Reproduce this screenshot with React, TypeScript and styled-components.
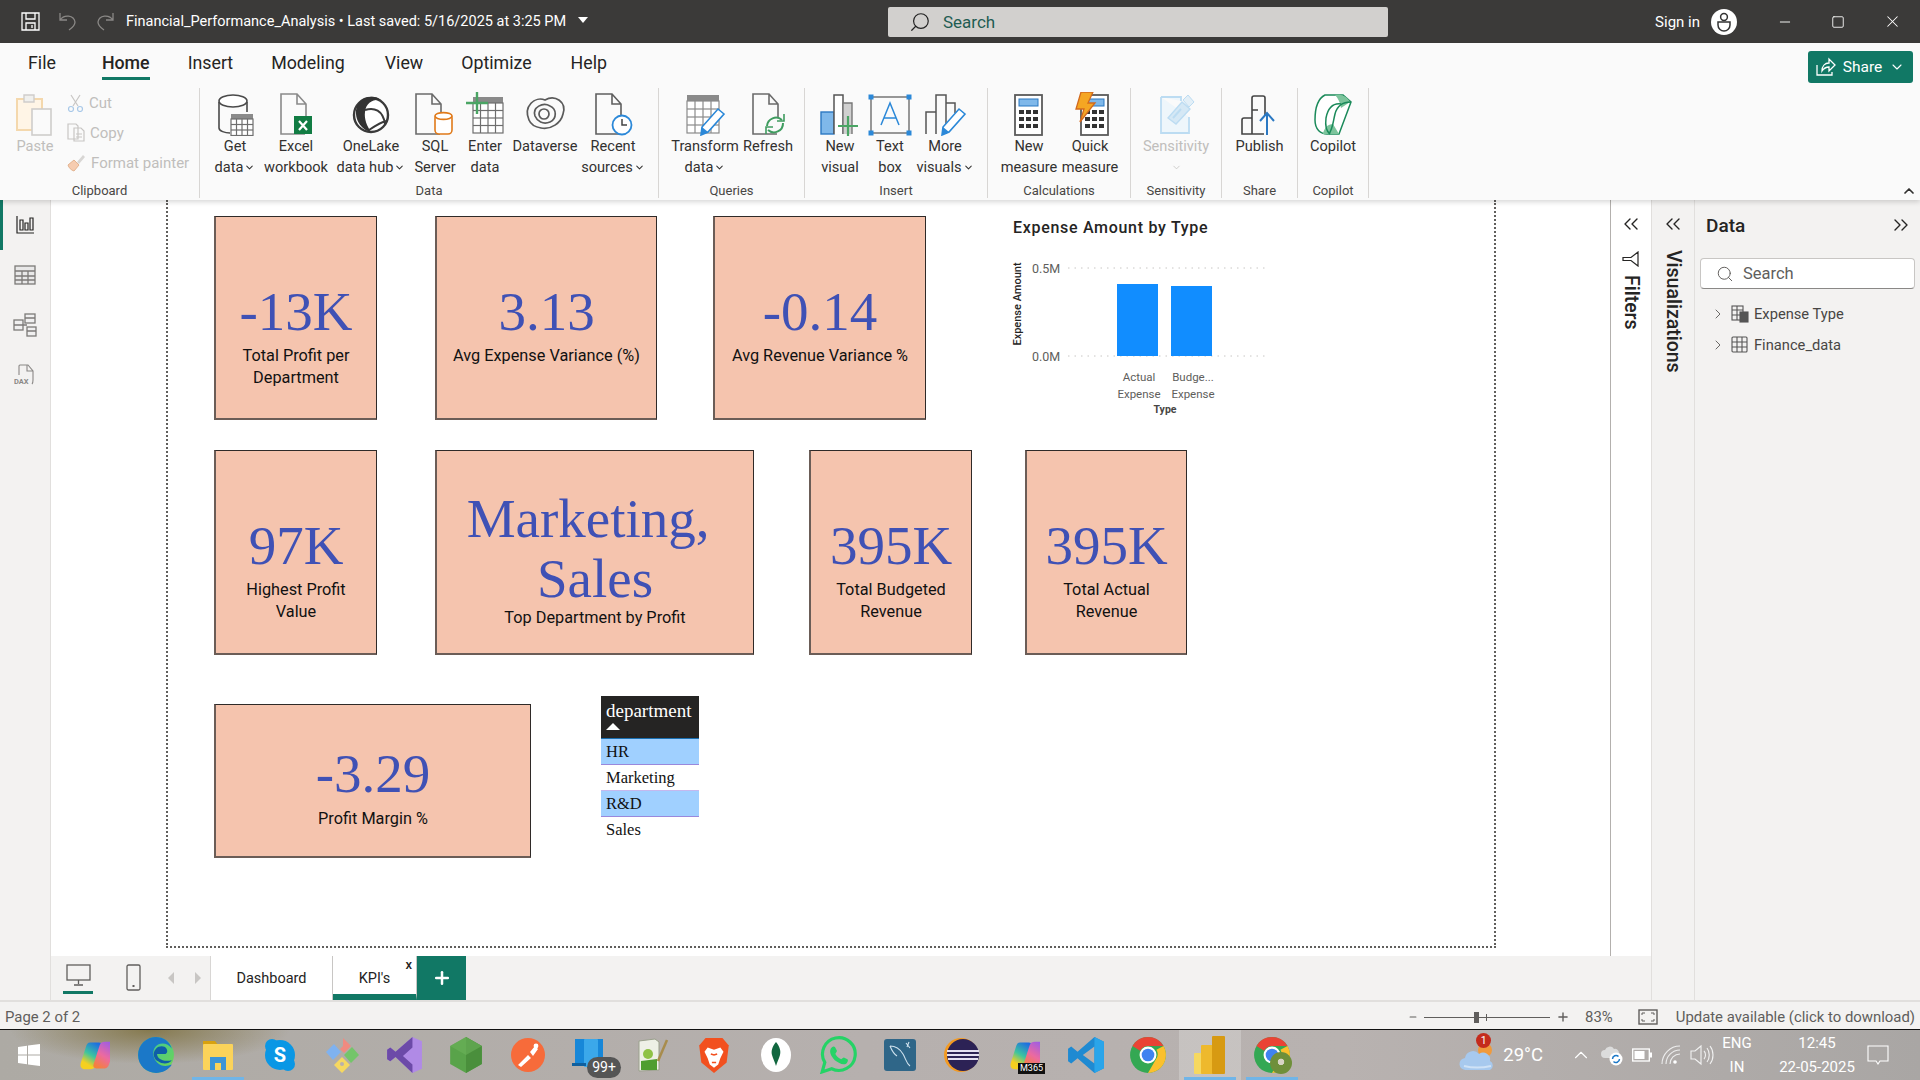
import React from "react";
import styled, { createGlobalStyle } from "styled-components";
import {
  ChevronDown,
  ChevronRight,
  ChevronUp,
  ChevronsLeft,
  ChevronsRight,
  Minus,
  Plus,
  Search,
  Square,
  X,
} from "lucide-react";

const UI_FONT = `Roboto, "Open Sans", sans-serif`;
const SERIF = `"Liberation Serif", serif`;

const GlobalStyle = createGlobalStyle`
  html, body { margin: 0; padding: 0; overflow: hidden; background: #fff; }
  #root { width: 1920px; height: 1080px; }
  * { box-sizing: border-box; }
`;

/* ---------- ribbon icons ---------- */

const I = ({ children, w = 44, h = 44 }: { children: React.ReactNode; w?: number; h?: number }) => (
  <svg width={w} height={h} viewBox={`0 0 ${w} ${h}`} fill="none">
    {children}
  </svg>
);

const Doc = ({ x = 8, c = "#737373" }: { x?: number; c?: string }) => (
  <path d={`M${x + 25} 42H${x + 1}V2h16l9 10v14M${x + 17} 2v10h9`} stroke={c} strokeWidth="1.6" />
);

const Grid = ({ x, y, s = 5.5, n = 4, m = 3, c = "#6e6e6e" }: { x: number; y: number; s?: number; n?: number; m?: number; c?: string }) => (
  <g stroke={c} strokeWidth="1.2">
    <rect x={x} y={y} width={s * n} height={s * m} fill="#fff" />
    {Array.from({ length: n - 1 }).map((_, i) => (
      <path key={i} d={`M${x + s * (i + 1)} ${y}v${s * m}`} />
    ))}
    {Array.from({ length: m - 1 }).map((_, i) => (
      <path key={i} d={`M${x} ${y + s * (i + 1)}h${s * n}`} />
    ))}
  </g>
);

const Pencil = ({ x = 0, y = 0 }: { x?: number; y?: number }) => (
  <g transform={`translate(${x} ${y})`}>
    <path d="M4 30l1-8L21 4l6 5L11 27z" fill="#fff" stroke="#2b88d8" strokeWidth="1.6" />
    <path d="M4 30l1-8 6 5z" fill="#2b88d8" />
  </g>
);

const GetDataIcon = () => (
  <I>
    <path d="M6 10v26c0 3 6 5 11 5M34 10v10" stroke="#4a4a4a" strokeWidth="1.6" />
    <ellipse cx="20" cy="9" rx="14" ry="6" stroke="#4a4a4a" strokeWidth="1.6" fill="#fff" />
    <rect x="18" y="22" width="22" height="5" fill="#8a8a8a" />
    <Grid x={18} y={27} s={5.5} n={4} m={3} />
  </I>
);
const ExcelIcon = () => (
  <I>
    <Doc x={6} c="#8a8a8a" />
    <rect x="20" y="24" width="18" height="18" fill="#117c43" />
    <path d="M25 29l8 9M33 29l-8 9" stroke="#fff" strokeWidth="2.2" />
  </I>
);
const OneLakeIcon = () => (
  <I>
    <circle cx="22" cy="23" r="17" stroke="#3a3a3a" strokeWidth="2.4" fill="#fff" />
    <path d="M8 14C12 4 26 2 32 8c-8-1-15 3-16 12-1 7 2 14 6 20C12 38 4 26 8 14z" fill="#333" />
    <path d="M16 18c9-3 18 0 20 14M20 38c6-4 12-8 17-9" stroke="#3a3a3a" strokeWidth="2" />
  </I>
);
const SqlIcon = () => (
  <I>
    <Doc x={2} c="#6b6b6b" />
    <rect x="22" y="22" width="17" height="20" rx="4" fill="#fff" stroke="#e07a1a" strokeWidth="1.6" />
    <ellipse cx="30.5" cy="24" rx="8.5" ry="3.4" fill="#fff" stroke="#e07a1a" strokeWidth="1.6" />
  </I>
);
const EnterDataIcon = () => (
  <I>
    <rect x="10" y="5" width="30" height="6" fill="#8a8a8a" />
    <Grid x={10} y={11} s={7.5} n={4} m={4} />
    <path d="M14 0v22M3 11h22" stroke="#4aa564" strokeWidth="2.4" />
  </I>
);
const DataverseIcon = () => (
  <I>
    <path
      d="M6 28C0 14 12 4 22 8c10-6 22 2 18 14-2 9-12 16-22 14-6-1-10-3-12-8z"
      stroke="#5a5a5a"
      strokeWidth="1.7"
    />
    <path d="M12 24c-3-9 8-14 15-10 7 3 7 13 0 16-7 3-13-1-15-6z" stroke="#5a5a5a" strokeWidth="1.7" />
    <circle cx="21" cy="22" r="5" stroke="#5a5a5a" strokeWidth="1.7" />
  </I>
);
const RecentIcon = () => (
  <I>
    <Doc x={4} c="#5f5f5f" />
    <circle cx="31" cy="33" r="9.5" fill="#fff" stroke="#2b88d8" strokeWidth="1.8" />
    <path d="M31 27v6h5" stroke="#444" strokeWidth="1.5" />
  </I>
);
const TransformIcon = () => (
  <I>
    <rect x="4" y="3" width="32" height="6" fill="#8a8a8a" />
    <Grid x={4} y={9} s={8} n={4} m={4} c="#8a8a8a" />
    <Pencil x={14} y={13} />
  </I>
);
const RefreshIcon = () => (
  <I>
    <Doc x={6} c="#6b6b6b" />
    <path d="M21 34a9 9 0 0 1 15-6M37 31a9 9 0 0 1-15 7" stroke="#3f9c5f" strokeWidth="2" fill="none" />
    <path d="M38 22v7h-7M20 42v-7h7" stroke="#3f9c5f" strokeWidth="1.6" fill="none" />
  </I>
);
const NewVisualIcon = () => (
  <I>
    <rect x="3" y="20" width="13" height="22" fill="#7fb8ea" stroke="#2b78c2" strokeWidth="1.4" />
    <path d="M16 42V3h9v39" stroke="#555" strokeWidth="1.5" fill="#fff" />
    <path d="M25 42V11h9v31" fill="#d0d0d0" stroke="#777" strokeWidth="1.4" />
    <path d="M30 24v20M20 34h20" stroke="#4aa564" strokeWidth="2.2" />
  </I>
);
const TextBoxIcon = () => (
  <I>
    <rect x="3" y="5" width="38" height="36" stroke="#555" strokeWidth="1.2" />
    {[
      [3, 5],
      [41, 5],
      [3, 41],
      [41, 41],
    ].map(([x, y]) => (
      <rect key={x * 100 + y} x={x - 2.5} y={y - 2.5} width="5" height="5" fill="#2b88d8" />
    ))}
    <path d="M13 33L22 11l9 22M16 26h12" stroke="#2b88d8" strokeWidth="1.5" />
  </I>
);
const MoreVisualsIcon = () => (
  <I>
    <path d="M3 42V20h10v22M13 42V3h10v39M23 42V11h9v10" stroke="#555" strokeWidth="1.5" />
    <Pencil x={15} y={13} />
  </I>
);
const Calc = ({ x = 8 }: { x?: number }) => (
  <g>
    <rect x={x} y="3" width="27" height="40" fill="#fff" stroke="#5a5a5a" strokeWidth="1.8" />
    <rect x={x + 4} y="7" width="19" height="7" fill="#7fb8ea" stroke="#2b78c2" />
    {[18, 25, 32].map((y) =>
      [4, 11, 18].map((dx) => <rect key={y * 100 + dx} x={x + dx} y={y} width="5" height="4" fill="#333" />)
    )}
  </g>
);
const NewMeasureIcon = () => (
  <I>
    <Calc x={8} />
  </I>
);
const QuickMeasureIcon = () => (
  <I>
    <Calc x={13} />
    <path d="M13 0h12l-5 11h7L12 30l4-13H8z" fill="#f5a623" stroke="#d2691e" strokeWidth="1.3" />
  </I>
);
const SensitivityIcon = () => (
  <I>
    <path d="M7 5h20v4M7 5v36h28V25" stroke="#bcdcf2" strokeWidth="1.8" fill="#eef6fb" />
    <path d="M14 26L28 10l8 7-14 15z" fill="#d5e8f5" stroke="#bcdcf2" strokeWidth="1.4" />
    <path d="M29 8l5-5 6 7-5 5z" fill="#e3eff7" stroke="#bcdcf2" />
    <path d="M19 26l8-9" stroke="#bcdcf2" strokeWidth="2" />
  </I>
);
const PublishIcon = () => (
  <I>
    <path
      d="M4 42h10V26H6a2 2 0 0 0-2 2zM14 26v-8h6M14 18V6a2 2 0 0 1 2-2h9a2 2 0 0 1 2 2v18M14 42h12"
      stroke="#444"
      strokeWidth="1.6"
    />
    <path d="M29 43V22M22 29l7-8 7 8" stroke="#2b78c2" strokeWidth="2" />
  </I>
);
const CopilotRibbonIcon = () => (
  <I>
    <path d="M14 3h18l8 7-12 32H16c-6 0-12-4-12-14C4 14 8 6 14 3z" fill="#fff" stroke="#1b8a5a" strokeWidth="1.5" />
    <path d="M24 3c6-1 12 1 15 7L30 16c-1-6-3-10-6-13zM12 42c1-6 5-10 10-10l6 10z" fill="#7cc49c" />
    <path d="M30 12c-8-1-13 4-15 14-1 8 0 13 4 16" stroke="#1b8a5a" strokeWidth="1.5" />
    <path d="M40 10c-8 0-14 4-16 12-2 8-2 14-6 20" stroke="#1b8a5a" strokeWidth="1.5" />
  </I>
);

/* ---------- taskbar icons ---------- */

const WindowsIcon = () => (
  <svg width="22" height="22" viewBox="0 0 22 22" fill="#fff">
    <path d="M0 3l9-1.3V10.4H0zM10 1.5L22 0v10.4H10zM0 11.5h9v8.8L0 19zM10 11.5h12V22l-12-1.6z" />
  </svg>
);

const T = ({ children, size = 36 }: { children: React.ReactNode; size?: number }) => (
  <svg width={size} height={size} viewBox="0 0 36 36" fill="none">
    {children}
  </svg>
);

const COPILOT_PATH = "M13 3h10c3 0 4 2 3 5l-7 22c-1 3-3 4-6 4H7c-4 0-6-3-5-7L8 8c1-3 2-5 5-5z";

const CopilotIcon = ({ id }: { id: string }) => (
  <T size={31}>
    <defs>
      <linearGradient id={`${id}a`} x1="0.7" y1="0" x2="0.2" y2="1">
        <stop offset="0" stopColor="#1f6fe0" />
        <stop offset=".45" stopColor="#3cc4a0" />
        <stop offset=".8" stopColor="#f5d020" />
      </linearGradient>
      <linearGradient id={`${id}b`} x1="0.7" y1="0" x2="0.2" y2="1">
        <stop offset="0" stopColor="#f5803c" />
        <stop offset=".45" stopColor="#ec6aa0" />
        <stop offset="1" stopColor="#9a5ce8" />
      </linearGradient>
    </defs>
    <path d={COPILOT_PATH} fill={`url(#${id}a)`} />
    <path d={COPILOT_PATH} fill={`url(#${id}b)`} transform="rotate(180 18 18) translate(-7 0)" />
  </T>
);
const EdgeIcon = () => (
  <T size={38}>
    <defs>
      <linearGradient id="edgeA" x1="0" y1="0" x2="1" y2="1">
        <stop offset="0" stopColor="#34c4a8" />
        <stop offset="1" stopColor="#72d64e" />
      </linearGradient>
    </defs>
    <circle cx="18" cy="18" r="17" fill="url(#edgeA)" />
    <path d="M1 18C1 8 9 1 18 1c7 0 13 4 15 11-3-5-9-6-13-4-6 3-6 12-1 17 4 4 9 4 14 2-3 5-9 8-15 8C9 35 1 28 1 18z" fill="#1b78c8" />
    <path d="M20 24c-4-2-6-8-2-12 3-3 8-3 10 0 1 2 1 4-1 5h-8c0 4 5 8 14 6-3 4-9 4-13 1z" fill="#0f5ea8" />
  </T>
);
const ExplorerIcon = () => (
  <T size={36}>
    <path d="M3 4h12l3 4H3z" fill="#d8a10f" />
    <rect x="3" y="7" width="30" height="26" rx="1" fill="#fbd35a" />
    <path d="M10 33V20h16v13h-5v-7h-6v7z" fill="#3d95d6" />
  </T>
);
const SkypeIcon = () => (
  <T size={36}>
    <circle cx="18" cy="18" r="15" fill="#0a97e5" />
    <circle cx="10" cy="9" r="7" fill="#0a97e5" />
    <circle cx="26" cy="27" r="7" fill="#0a97e5" />
    <text x="18" y="25" textAnchor="middle" fontSize="20" fontWeight="700" fill="#fff" fontFamily={UI_FONT}>
      S
    </text>
  </T>
);
const KrakenIcon = () => (
  <T size={36}>
    <path d="M19 1l8 8-7 7-4-4 3-3z" fill="#f08a80" />
    <path d="M2 15l8-8 7 8-8 8z" fill="#7fb2f0" />
    <path d="M28 10l7 8-8 8-7-8z" fill="#74c56a" />
    <path d="M18 20l8 8-8 8-8-8z" fill="#f6d860" />
    <circle cx="18" cy="27" r="2" fill="#b8b0ae" />
  </T>
);
const VsIcon = () => (
  <T size={38}>
    <path d="M26 1l9 4v26l-9 4L10 20l-5 4-3-2V13l3-2 5 4z" fill="#b08ae6" />
    <path d="M26 1L10 15l-5-4-3 2v9l3 2 5-4 16 15 0-8-9-8 9-8z" fill="#6c4aa8" />
  </T>
);
const NodeIcon = () => (
  <T size={38}>
    <path d="M18 1l15 8.5v17L18 35 3 26.5v-17z" fill="#59a34a" />
    <path d="M18 1l15 8.5v17L18 35z" fill="#4a8f3c" />
    <path d="M18 1L3 9.5 18 18l15-8.5z" fill="#6cb25a" opacity=".6" />
  </T>
);
const PostmanIcon = () => (
  <T size={36}>
    <circle cx="18" cy="18" r="17" fill="#f76b3a" />
    <path d="M8 28l10-10 3 3-10 9zM20 15l5-6 3 3-5 7z" fill="#fff" />
    <circle cx="26" cy="9" r="2.4" fill="#fff" />
  </T>
);
const DevicesIcon = () => (
  <T size={36}>
    <rect x="3" y="2" width="28" height="24" fill="#1787d8" />
    <rect x="12" y="2" width="14" height="28" rx="1" fill="#3ba8ea" />
    <rect x="0" y="26" width="14" height="3" fill="#0f5f9e" />
  </T>
);
const NotepadIcon = () => (
  <T size={36}>
    <path d="M5 4l16-2 4 3v28l-20 1z" fill="#eef0e6" stroke="#9aa08c" />
    <path d="M7 24l16-2v11H7z" fill="#4f9e2f" />
    <circle cx="14" cy="17" r="5" fill="#8fc246" />
    <path d="M24 24L33 3" stroke="#a88c4c" strokeWidth="2.5" />
  </T>
);
const BraveIcon = () => (
  <T size={38}>
    <path d="M10 2h16l6 7-2 16-12 10L6 25 4 9z" fill="#f2501f" />
    <path d="M12 11l6 2 6-2 3 4-3 6-2 6-4 3-4-3-2-6-3-6z" fill="#fff" />
    <path d="M15 17l3 1 3-1M16 25h4" stroke="#f2501f" strokeWidth="1.4" />
  </T>
);
const MongoIcon = () => (
  <T size={36}>
    <ellipse cx="18" cy="18" rx="15" ry="17" fill="#fff" />
    <path d="M18 5c4 5 5 9 4 13-1 4-3 7-4 11-1-4-3-7-4-11-1-4 0-8 4-13z" fill="#11673f" />
  </T>
);
const WhatsappIcon = () => (
  <T size={38}>
    <path
      d="M3 34l2.5-9A15.5 15.5 0 1 1 12 31z"
      stroke="#25d366"
      strokeWidth="3"
      fill="none"
    />
    <path
      d="M12 11c2-2 3-1 4 1l1 2c0 1-1 2-1.5 3 1 2 3 4 5.5 5 1-.5 2-2 3-1.5l3 1.5c1 1 0 3-1 4-3 2-7 0-11-3-4-4-6-9-3-12z"
      fill="#25d366"
    />
  </T>
);
const MysqlIcon = () => (
  <T size={36}>
    <rect x="2" y="2" width="32" height="32" rx="3" fill="#2f6688" />
    <path d="M8 9c6 0 10 3 13 8s3 9 7 12M8 9c2 5 4 8 7 10M24 6l4 5M27 5l-2 5" stroke="#cfe2ee" strokeWidth="1.1" fill="none" />
  </T>
);
const EclipseIcon = () => (
  <T size={36}>
    <circle cx="17" cy="18" r="17" fill="#f39a22" />
    <circle cx="19" cy="18" r="16" fill="#2c2255" />
    <path d="M3 14h32M3 18h32M4 22h30" stroke="#e4e0f2" strokeWidth="2" />
  </T>
);
const VscodeIcon = () => (
  <T size={38}>
    <path d="M26 1l9 4.5v25L26 35 10 21l-6 5-3-2V12l3-2 6 5z" fill="#1f8ad2" />
    <path d="M26 10L15 18l11 8z" fill="#b8b0ae" />
    <path d="M26 1l9 4.5v25L26 35z" fill="#2aa5ea" />
  </T>
);
const ChromeIcon = () => (
  <T size={38}>
    <circle cx="18" cy="18" r="17" fill="#34a853" />
    <path d="M18 1a17 17 0 0 1 14.7 8.5H18A8.5 8.5 0 0 0 10.6 14L3.3 9.5A17 17 0 0 1 18 1z" fill="#ea4335" />
    <path d="M32.7 9.5A17 17 0 0 1 18 35l7.4-12.7A8.5 8.5 0 0 0 26 13z" fill="#fbc02d" />
    <circle cx="18" cy="18" r="8" fill="#fff" />
    <circle cx="18" cy="18" r="6" fill="#3f83f0" />
  </T>
);
const PowerBiIcon = () => (
  <svg width="32" height="38" viewBox="0 0 32 38">
    <rect x="0" y="17" width="11" height="21" rx="1" fill="#f6d860" />
    <rect x="7" y="9" width="12" height="29" rx="1" fill="#eeb92d" />
    <rect x="18" y="0" width="13" height="38" rx="1" fill="#d79a12" />
  </svg>
);
const WeatherIcon = () => (
  <svg width="38" height="34" viewBox="0 0 38 34">
    <circle cx="26" cy="12" r="7" fill="#f09a3c" />
    <path d="M7 32a6 6 0 0 1-1-12 8 8 0 0 1 14-4 7 7 0 0 1 11 7 5 5 0 0 1 0 9z" fill="#a7c9ee" />
    <path d="M5 28c8 2 18 2 27 0" stroke="#cfe2f6" strokeWidth="2" fill="none" />
  </svg>
);
const CloudSyncIcon = () => (
  <svg width="24" height="24" viewBox="0 0 24 24">
    <path d="M5 15a4 4 0 0 1 0-8 5 5 0 0 1 9-1 4 4 0 0 1 5 4 3 3 0 0 1 0 5z" fill="#dcdcdc" />
    <circle cx="16" cy="16" r="6.5" fill="#fff" />
    <path d="M12.5 16a3.5 3.5 0 0 1 6-2.4M19.5 16a3.5 3.5 0 0 1-6 2.4" stroke="#1b78c8" strokeWidth="1.5" fill="none" />
  </svg>
);
const BatteryIcon = () => (
  <svg width="20" height="14" viewBox="0 0 20 14">
    <rect x=".7" y="1" width="16.6" height="12" stroke="#fff" strokeWidth="1.3" fill="none" />
    <rect x="2.5" y="3" width="10" height="8" fill="#fff" />
    <rect x="18" y="4.5" width="2" height="5" fill="#fff" />
  </svg>
);
const SignalIcon = () => (
  <svg width="22" height="22" viewBox="0 0 22 22" fill="none" stroke="#eee" strokeWidth="1.1">
    <path d="M2 20A18 18 0 0 1 20 2M6 20A14 14 0 0 1 20 6M10 20a10 10 0 0 1 10-10" />
    <circle cx="15" cy="18" r="1.8" fill="#fff" stroke="none" />
  </svg>
);
const VolumeIcon = () => (
  <svg width="24" height="22" viewBox="0 0 24 22" fill="none" stroke="#f2f2f2" strokeWidth="1.1">
    <path d="M1 7h4l6-5v18l-6-5H1zM14 7c2 2 2 6 0 8M17 4c3 4 3 10 0 14M20 2c4 5 4 13 0 18" />
  </svg>
);
const NotifyGlyph = () => (
  <svg width="22" height="22" viewBox="0 0 22 22" fill="none" stroke="#fff" strokeWidth="1.1">
    <path d="M1 2h20v15h-8l-2 3-2-3H1z" />
  </svg>
);

/* ---------- small icons ---------- */

const SaveIcon = () => (
  <svg width="19" height="19" viewBox="0 0 19 19" fill="none" stroke="#fff" strokeWidth="1.3">
    <path d="M1 1h17v17H1zM5 1v6h9V1M5 18v-7h9v7M11 13v3" />
  </svg>
);
const UndoIcon = ({ flip }: { flip?: boolean }) => (
  <svg width="18" height="19" viewBox="0 0 18 19" fill="none" stroke="#8a8886" strokeWidth="1.3">
    <g transform={flip ? "translate(18 0) scale(-1 1)" : undefined}>
      <path d="M1 1v7h7M1 8c4-6 14-5 15 2 0 3-3 6-6 8" />
    </g>
  </svg>
);
const AvatarIcon = () => (
  <svg width="26" height="26" viewBox="0 0 26 26">
    <circle cx="13" cy="13" r="13" fill="#fff" />
    <circle cx="13" cy="8" r="3.4" fill="none" stroke="#333" strokeWidth="1.5" />
    <path d="M7 13h12v3a6 6 0 0 1-12 0z" fill="none" stroke="#333" strokeWidth="1.5" />
  </svg>
);
const ShareIcon = () => (
  <svg width="20" height="20" viewBox="0 0 20 20" fill="none" stroke="#fff" strokeWidth="1.3">
    <path d="M1 8v10h15v-3M6 14c0-5 3-8 7-8V2l6 6-6 6v-4c-3 0-5 1-7 4z" />
  </svg>
);
const FunnelIcon = () => (
  <svg width="18" height="16" viewBox="0 0 18 16" fill="none" stroke="#252423" strokeWidth="1.2">
    <path d="M16 1v14L9 9.500H1V6.500h8z" />
  </svg>
);
const ReportIcon = () => (
  <svg width="18" height="18" viewBox="0 0 18 18" fill="none" stroke="#252423" strokeWidth="1.2">
    <path d="M1 0v17h17M4 4h3v10H4zM9 7h3v7H9zM14 2h3v12h-3z" />
  </svg>
);
const TableIcon = () => (
  <svg width="22" height="20" viewBox="0 0 22 20" fill="#e8e8e8" stroke="#7c7a78" strokeWidth="1.3">
    <rect x="1" y="1" width="20" height="18" />
    <path d="M1 6h20M1 11h20M1 15h20M8 6v13M14 6v13" fill="none" />
  </svg>
);
const ModelIcon = () => (
  <svg width="24" height="24" viewBox="0 0 24 24" fill="#f0f0f0" stroke="#7c7a78" strokeWidth="1.3">
    <rect x="1" y="7" width="9" height="10" />
    <rect x="12" y="1" width="10" height="9" />
    <rect x="14" y="14" width="9" height="9" />
    <path d="M1 12h9M12 5h10M14 18h9M10 12h4" fill="none" />
  </svg>
);
const DaxIcon = () => (
  <svg width="22" height="22" viewBox="0 0 22 22" fill="none" stroke="#8a8886" strokeWidth="1.1">
    <path d="M5 11V2a1 1 0 0 1 1-1h8l5 6v9c0 1 0 3-1 4M13 1v6h6" />
    <text x="0" y="20" fontSize="7.5" fontWeight="700" fill="#8a8886" stroke="none" fontFamily={UI_FONT}>
      DAX
    </text>
  </svg>
);
const FieldCalcIcon = () => (
  <svg width="18" height="18" viewBox="0 0 18 18" fill="none" stroke="#555" strokeWidth="1.1">
    <rect x="1" y="1" width="11" height="14" />
    <path d="M1 5h11M1 10h11M6 1v14" />
    <rect x="9" y="7" width="8" height="10" fill="#555" />
  </svg>
);
const FieldTableIcon = () => (
  <svg width="18" height="17" viewBox="0 0 18 17" fill="none" stroke="#555" strokeWidth="1.1">
    <rect x="1" y="1" width="15" height="15" rx="1" />
    <path d="M1 6h15M1 11h15M6 1v15M11 1v15" />
  </svg>
);
const MonitorIcon = () => (
  <svg width="25" height="23" viewBox="0 0 25 23" fill="none" stroke="#605e5c" strokeWidth="1.3">
    <rect x="1" y="1" width="23" height="15" />
    <path d="M12.500 16v4M8 21h9" />
  </svg>
);
const PhoneIcon = () => (
  <svg width="15" height="27" viewBox="0 0 15 27" fill="none" stroke="#605e5c" strokeWidth="1.3">
    <rect x="1" y="1" width="13" height="25" rx="1.5" />
    <path d="M6.500 22h2" strokeWidth="2" />
  </svg>
);
const FitIcon = () => (
  <svg width="20" height="16" viewBox="0 0 20 16" fill="none" stroke="#605e5c">
    <rect x="1" y="1" width="18" height="14" strokeWidth="1.4" />
    <path d="M4 6V4h3M13 4h3v2M16 10v2h-3M7 12H4v-2" strokeWidth="1" />
  </svg>
);
const CutIcon = () => (
  <svg width="17" height="18" viewBox="0 0 17 18" fill="none" stroke="#c8c6c4" strokeWidth="1.2">
    <path d="M4 1l7 11M13 1L6 12" />
    <circle cx="4" cy="15" r="2.500" stroke="#a8c8e8" />
    <circle cx="13" cy="15" r="2.500" stroke="#a8c8e8" />
  </svg>
);
const CopyIcon = () => (
  <svg width="18" height="19" viewBox="0 0 18 19" fill="none" stroke="#c8c6c4" strokeWidth="1.2">
    <path d="M1 1h8l2 2v13H1zM7 5h7l3 3v10H7zM9 11h6M9 14h6" />
  </svg>
);
const BrushIcon = () => (
  <svg width="19" height="19" viewBox="0 0 19 19">
    <path d="M1 12l6-5 5 5-5 6c-3-1-5-3-6-6z" fill="#f6ccb0" stroke="#e3b38f" />
    <path d="M10 9l6-7 2 2-6 7z" fill="#d8d6d4" />
  </svg>
);
const PasteIcon = () => (
  <svg width="40" height="44" viewBox="0 0 40 44" fill="none">
    <path d="M2 7h25v31H2z" fill="#fff5e6" stroke="#f4d8ad" strokeWidth="2" />
    <path d="M9 3h10v7H9z" fill="#f0f0ee" stroke="#cfcdcb" strokeWidth="1.4" />
    <rect x="17" y="17" width="19" height="26" fill="#fafafa" stroke="#cfcdcb" strokeWidth="1.6" />
  </svg>
);

/* ---------- layout ---------- */

const Shell = styled.div`
  width: 1920px;
  height: 1080px;
  display: flex;
  flex-direction: column;
  overflow: hidden;
  font-family: ${UI_FONT};
  color: #252423;
`;

const TitleBar = styled.header`
  flex: 0 0 43px;
  background: #3b3a39;
  color: #fff;
  display: flex;
  align-items: center;
  position: relative;
  padding-left: 21px;
`;

const QuickAccess = styled.div`
  display: flex;
  align-items: center;
  gap: 19px;
  width: 105px;
`;

const DocTitle = styled.div`
  font-size: 14.5px;
  display: flex;
  align-items: center;
  gap: 6px;
  white-space: nowrap;
`;

const Caret = styled.span`
  width: 0;
  height: 0;
  margin-left: 6px;
  margin-top: -4px;
  border: 5.5px solid transparent;
  border-top: 6px solid #fff;
  border-bottom: 0;
`;

const TopSearch = styled.div`
  position: absolute;
  left: 888px;
  top: 7px;
  width: 500px;
  height: 30px;
  background: #d2d0ce;
  border-radius: 2px;
  display: flex;
  align-items: center;
  gap: 12px;
  padding-left: 21px;
  color: #1f5c52;
  font-size: 17px;
`;

const FlippedSearch = styled(Search)`
  transform: scaleX(-1);
`;

const TitleRight = styled.div`
  margin-left: auto;
  display: flex;
  align-items: center;
  font-size: 15px;
`;

const SignIn = styled.span`
  margin-right: 11px;
`;

const WindowButton = styled.span<{ $ml?: number }>`
  display: flex;
  margin-left: ${(p) => p.$ml ?? 0}px;
`;

const Ribbon = styled.section`
  flex: 0 0 157px;
  background: #fafafa;
  position: relative;
  z-index: 2;
  box-shadow: 0 2px 5px rgba(0, 0, 0, 0.16);
`;

const TabRow = styled.nav`
  height: 45px;
  display: flex;
  align-items: flex-start;
  padding-left: 28px;
  gap: 38px;
  font-size: 17.8px;
  position: relative;
`;

const RibbonTab = styled.span<{ $active?: boolean; $ml?: number }>`
  height: 37px;
  padding-top: 9px;
  margin-left: ${(p) => p.$ml ?? 0}px;
  font-weight: ${(p) => (p.$active ? 500 : 400)};
  border-bottom: ${(p) => (p.$active ? "3px solid #117865" : "none")};
`;

const ShareButton = styled.button`
  position: absolute;
  left: 1808px;
  top: 8px;
  width: 105px;
  height: 32px;
  border: 0;
  border-radius: 3px;
  background: #117865;
  color: #fff;
  display: flex;
  align-items: center;
  justify-content: center;
  gap: 7px;
  font: 15.5px ${UI_FONT};
`;

const GroupRow = styled.div`
  display: flex;
  height: 110px;
`;

const Group = styled.div<{ $w: number; $pl?: number }>`
  width: ${(p) => p.$w}px;
  height: 110px;
  display: flex;
  flex-direction: column;
  padding-left: ${(p) => p.$pl ?? 0}px;
  border-right: 1px solid #d8d6d4;
`;

const GroupItems = styled.div`
  flex: 1;
  display: flex;
  align-items: flex-start;
  padding-top: 4px;
`;

const GroupLabel = styled.div<{ $ml?: number }>`
  height: 14px;
  line-height: 14px;
  text-align: center;
  font-size: 13px;
  color: #484644;
  margin-left: ${(p) => -(p.$ml ?? 0)}px;
`;

const RibbonButton = styled.div<{ $w: number; $disabled?: boolean }>`
  width: ${(p) => p.$w}px;
  display: flex;
  flex-direction: column;
  align-items: center;
  color: ${(p) => (p.$disabled ? "#c0bebc" : "#323130")};
  font-size: 14.6px;
  line-height: 21px;
  white-space: nowrap;
`;

const IconBox = styled.div`
  height: 44px;
  display: flex;
  align-items: center;
  justify-content: center;
`;

const SmallChevron = styled(ChevronDown)`
  vertical-align: -1px;
  margin-left: 1px;
`;

const SensitivityChevron = styled(ChevronDown)`
  margin-top: 5px;
`;

const ClipboardSide = styled.div`
  display: flex;
  flex-direction: column;
  margin-left: 12px;
  gap: 9px;
  color: #c0bebc;
  font-size: 15px;
`;

const ClipRow = styled.div`
  display: flex;
  align-items: center;
  gap: 5px;
  height: 21px;
  white-space: nowrap;
`;

const CollapseButton = styled.span`
  position: absolute;
  right: 3px;
  bottom: 1px;
  display: flex;
`;

const Main = styled.div`
  flex: 1;
  display: flex;
  min-height: 0;
`;

const Rail = styled.aside`
  width: 51px;
  background: #f3f2f1;
  border-right: 1px solid #e1dfdd;
  display: flex;
  flex-direction: column;
`;

const RailItem = styled.div<{ $active?: boolean }>`
  height: 50px;
  display: flex;
  align-items: center;
  justify-content: center;
  border-left: 3px solid ${(p) => (p.$active ? "#117865" : "transparent")};
  padding-right: 3px;
`;

const Center = styled.div`
  flex: 0 0 1600px;
  display: flex;
  flex-direction: column;
  min-width: 0;
`;

const CanvasArea = styled.div`
  flex: 1;
  display: flex;
  background: #fff;
  min-height: 0;
`;

const Canvas = styled.main`
  flex: 1;
  padding: 0 0 8px 115px;
  min-width: 0;
`;

const Page = styled.div`
  width: 1330px;
  height: 100%;
  border: 2px dotted #605e5c;
  border-top: 0;
  padding: 16px 0 0 46px;
`;

const VisualRow = styled.div<{ $mt?: number }>`
  display: flex;
  align-items: flex-start;
  margin-top: ${(p) => p.$mt ?? 0}px;
`;

const Card = styled.div<{ $w: number; $h: number; $pt: number; $ml?: number; $mt?: number }>`
  width: ${(p) => p.$w}px;
  height: ${(p) => p.$h}px;
  margin-left: ${(p) => p.$ml ?? 0}px;
  margin-top: ${(p) => p.$mt ?? 0}px;
  padding-top: ${(p) => p.$pt}px;
  background: #f5c4ae;
  border-style: solid;
  border-width: 1px 1px 2px 2px;
  border-color: #2f2a28 #2f2a28 #6b5d57 #6b5d57;
  text-align: center;
`;

const CardValue = styled.div`
  font: 55px/60px ${SERIF};
  color: #3f51b5;
`;

const CardLabel = styled.div<{ $mt?: number }>`
  margin-top: ${(p) => p.$mt ?? 3}px;
  font-size: 16.3px;
  line-height: 22px;
  color: #111;
`;

const ChartBlock = styled.figure`
  margin: 0 0 0 84px;
  width: 270px;
`;

const ChartTitle = styled.figcaption`
  padding: 1px 0 0 3px;
  height: 24px;
  font-size: 16px;
  letter-spacing: 0.7px;
  line-height: 22px;
  font-weight: 500;
  color: #252423;
  white-space: nowrap;
`;

const ChartSvg = styled.svg`
  display: block;
`;

const DeptTable = styled.table`
  margin-left: 70px;
  width: 98px;
  border-collapse: collapse;
  font-family: ${SERIF};
  font-size: 16.5px;
`;

const DeptHead = styled.th`
  height: 42px;
  background: #252423;
  color: #fff;
  font-size: 19px;
  font-weight: 400;
  line-height: 22px;
  text-align: left;
  padding: 4px 0 0 5px;
  vertical-align: top;
  border-bottom: 1px solid #1a6fb0;
`;

const SortArrow = styled.div`
  width: 0;
  height: 0;
  margin-top: 1px;
  border: 7px solid transparent;
  border-bottom: 7px solid #fff;
  border-top: 0;
`;

const DeptCell = styled.td<{ $band?: boolean }>`
  height: 26px;
  padding: 2px 0 0 5px;
  background: ${(p) => (p.$band ? "#a0d0ff" : "#fff")};
  color: #111;
  border-bottom: 1px solid ${(p) => (p.$band ? "#9a88dc" : "#c5b8ee")};
`;

const PlainCell = styled(DeptCell)`
  border-bottom: 0;
`;

const FiltersPane = styled.div`
  flex: 0 0 41px;
  border-left: 1px solid #b3b0ad;
  display: flex;
  flex-direction: column;
  align-items: center;
  padding-top: 12px;
`;

const FunnelSlot = styled.div`
  margin-top: 15px;
  display: flex;
`;

const VerticalLabel = styled.div<{ $mt: number }>`
  writing-mode: vertical-rl;
  font-size: 19.5px;
  font-weight: 500;
  margin-top: ${(p) => p.$mt}px;
  color: #252423;
  white-space: nowrap;
`;

const PageTabs = styled.div`
  flex: 0 0 44px;
  background: #f3f2f1;
  display: flex;
  align-items: stretch;
`;

const ViewToggles = styled.div`
  width: 160px;
  display: flex;
  align-items: center;
  border-right: 1px solid #d8d6d4;
`;

const ViewButton = styled.div<{ $active?: boolean; $w: number }>`
  width: ${(p) => p.$w}px;
  height: 44px;
  padding-top: 8px;
  display: flex;
  justify-content: center;
  position: relative;
  &::after {
    content: "";
    display: ${(p) => (p.$active ? "block" : "none")};
    position: absolute;
    left: 12px;
    right: 12px;
    bottom: 6px;
    height: 3px;
    background: #117865;
  }
`;

const PagerArrow = styled.span<{ $right?: boolean }>`
  width: 0;
  height: 0;
  margin-left: ${(p) => (p.$right ? 21 : 7)}px;
  border-style: solid;
  border-width: 6px 0 6px 6px;
  border-color: transparent transparent transparent #c8c6c4;
  transform: ${(p) => (p.$right ? "none" : "scaleX(-1)")};
`;

const PageTab = styled.div<{ $active?: boolean; $w: number }>`
  width: ${(p) => p.$w}px;
  background: #fff;
  border-right: 1px solid #c8c6c4;
  border-bottom: ${(p) => (p.$active ? "6px solid #117865" : "none")};
  display: flex;
  align-items: center;
  justify-content: center;
  font-size: 14.5px;
  padding-top: ${(p) => (p.$active ? 6 : 0)}px;
  position: relative;
`;

const TabClose = styled.span`
  position: absolute;
  right: 4px;
  top: 1px;
  font-size: 13px;
  font-weight: 500;
`;

const AddPage = styled.div`
  width: 49px;
  background: #117865;
  display: flex;
  align-items: center;
  justify-content: center;
`;

const VizPane = styled.aside`
  flex: 0 0 44px;
  background: #f3f2f1;
  border-left: 1px solid #e1dfdd;
  border-right: 1px solid #e1dfdd;
  display: flex;
  flex-direction: column;
  align-items: center;
  padding-top: 12px;
`;

const DataPane = styled.aside`
  flex: 1;
  background: #f3f2f1;
  padding: 13px 5px 0 11px;
`;

const DataHeader = styled.div`
  display: flex;
  align-items: center;
  justify-content: space-between;
  font-size: 19px;
  font-weight: 500;
  height: 24px;
  padding-right: 2px;
`;

const DataSearch = styled.div`
  margin: 21px 0 0 -6px;
  height: 31px;
  border: 1px solid #c8c6c4;
  border-bottom: 1.5px solid #8a8886;
  border-radius: 4px;
  background: #fff;
  display: flex;
  align-items: center;
  gap: 9px;
  padding-left: 15px;
  color: #605e5c;
  font-size: 16.5px;
`;

const TreeList = styled.ul`
  list-style: none;
  margin: 10px 0 0;
  padding: 0 0 0 4px;
`;

const TreeRow = styled.li`
  height: 30.5px;
  display: flex;
  align-items: center;
  gap: 5px;
  font-size: 14.7px;
  color: #484644;
`;

const StatusBar = styled.footer`
  flex: 0 0 29px;
  background: #f3f2f1;
  border-top: 2px solid #e1dfdd;
  display: flex;
  align-items: center;
  padding: 3px 0 0 5px;
  color: #605e5c;
  font-size: 14.9px;
  white-space: nowrap;
`;

const ZoomControls = styled.div`
  margin-left: auto;
  display: flex;
  align-items: center;
  padding-right: 5px;
`;

const ZoomTrack = styled.div`
  width: 126px;
  height: 1px;
  margin: 0 6px;
  background: #605e5c;
  position: relative;
`;

const ZoomThumb = styled.span`
  position: absolute;
  left: 50px;
  top: -5px;
  width: 5px;
  height: 11px;
  background: #605e5c;
`;

const ZoomTick = styled.span`
  position: absolute;
  left: 62px;
  top: -3px;
  width: 1px;
  height: 7px;
  background: #605e5c;
`;

const ZoomPct = styled.span`
  margin: 0 25px 0 15px;
`;

const UpdateText = styled.span`
  margin-left: 18px;
`;

const Taskbar = styled.footer`
  flex: 0 0 51px;
  border-top: 1px solid #111;
  background:
    radial-gradient(ellipse 140px 34px at 150px 0, rgba(120, 105, 50, 0.75), rgba(120, 105, 50, 0) 100%),
    linear-gradient(90deg, #adaaa4 0%, #b6b0ae 45%, #b8b2b0 70%, #a9a6a4 100%);
  display: flex;
  align-items: stretch;
  color: #fff;
`;

const StartButton = styled.div`
  width: 63px;
  display: flex;
  align-items: center;
  justify-content: center;
  padding-right: 5px;
`;

const TaskIcon = styled.div<{ $active?: boolean; $open?: boolean }>`
  width: 62px;
  display: flex;
  align-items: center;
  justify-content: center;
  position: relative;
  background: ${(p) => (p.$active ? "rgba(255,255,255,0.22)" : "transparent")};
  &::after {
    content: "";
    display: ${(p) => (p.$open ? "block" : "none")};
    position: absolute;
    left: 5px;
    right: 5px;
    bottom: 0;
    height: 3px;
    background: #70b5e8;
  }
`;

const Badge = styled.span`
  position: absolute;
  right: 0;
  bottom: 2px;
  min-width: 34px;
  height: 21px;
  padding: 0 4px;
  border-radius: 11px;
  background: #555;
  font-size: 14px;
  line-height: 21px;
  text-align: center;
`;

const M365Tag = styled.span`
  position: absolute;
  left: 25px;
  bottom: 6px;
  padding: 0 2px;
  background: #111;
  font-size: 9px;
  line-height: 11px;
`;

const ProfileDot = styled.span`
  position: absolute;
  right: 11px;
  bottom: 6px;
  width: 22px;
  height: 22px;
  border-radius: 50%;
  background: radial-gradient(circle at 50% 45%, #d8d4c4 0 18%, #6f8f3a 22% 100%);
`;

const Tray = styled.div`
  margin-left: auto;
  display: flex;
  align-items: center;
  padding-right: 31px;
  font-size: 14px;
`;

const WeatherBox = styled.div`
  position: relative;
  display: flex;
  align-items: center;
  margin-right: 27px;
  gap: 6px;
  font-size: 18.5px;
`;

const AlertDot = styled.span`
  position: absolute;
  left: 17px;
  top: -5px;
  width: 15px;
  height: 15px;
  border-radius: 50%;
  background: #c42b1c;
  font-size: 10.5px;
  line-height: 15px;
  text-align: center;
`;

const TrayIcons = styled.div`
  display: flex;
  align-items: center;
  gap: 8px;
`;

const TwoLine = styled.div<{ $w: number; $ml: number }>`
  width: ${(p) => p.$w}px;
  margin-left: ${(p) => p.$ml}px;
  text-align: center;
  font-size: 15px;
  line-height: 24px;
  white-space: nowrap;
`;

const NotifyIcon = styled.div`
  margin-left: 5px;
  display: flex;
`;

/* ---------- page ---------- */

const Caretted = ({ children }: { children: React.ReactNode }) => (
  <span>
    {children}
    <SmallChevron size={11} strokeWidth={2.2} />
  </span>
);

const ExpenseChart = () => {
  const textProps = { fontFamily: UI_FONT, fill: "#605e5c" };
  return (
    <ChartSvg width="270" height="180" viewBox="0 0 270 180">
      <text
        transform="translate(11 64) rotate(-90)"
        textAnchor="middle"
        fontSize="11"
        fontWeight="500"
        fontFamily={UI_FONT}
        fill="#252423"
      >
        Expense Amount
      </text>
      <text x="22" y="33" fontSize="12.5" {...textProps}>
        0.5M
      </text>
      <text x="22" y="121" fontSize="12.5" {...textProps}>
        0.0M
      </text>
      <path d="M58 28H255M58 116H255" stroke="#c8c6c4" strokeDasharray="1.5 5" />
      <rect x="107" y="44" width="41" height="72" fill="#118dff" />
      <rect x="161" y="46" width="41" height="70" fill="#118dff" />
      <text x="129" y="141" textAnchor="middle" fontSize="11.5" {...textProps}>
        Actual
      </text>
      <text x="129" y="158" textAnchor="middle" fontSize="11.5" {...textProps}>
        Expense
      </text>
      <text x="183" y="141" textAnchor="middle" fontSize="11.5" {...textProps}>
        Budge...
      </text>
      <text x="183" y="158" textAnchor="middle" fontSize="11.5" {...textProps}>
        Expense
      </text>
      <text x="155" y="173" textAnchor="middle" fontSize="10.5" fontWeight="700" fontFamily={UI_FONT} fill="#484644">
        Type
      </text>
    </ChartSvg>
  );
};

export default function App() {
  return (
    <>
      <GlobalStyle />
      <Shell>
        <TitleBar>
          <QuickAccess>
            <SaveIcon />
            <UndoIcon />
            <UndoIcon flip />
          </QuickAccess>
          <DocTitle>
            Financial_Performance_Analysis • Last saved: 5/16/2025 at 3:25 PM
            <Caret />
          </DocTitle>
          <TopSearch>
            <FlippedSearch size={22} color="#222" strokeWidth={1.3} />
            Search
          </TopSearch>
          <TitleRight>
            <SignIn>Sign in</SignIn>
            <AvatarIcon />
            <WindowButton $ml={40}>
              <Minus size={16} color="#fff" strokeWidth={1.4} />
            </WindowButton>
            <WindowButton $ml={38}>
              <Square size={14} color="#fff" strokeWidth={1.5} />
            </WindowButton>
            <WindowButton $ml={38}>
              <X size={19} color="#fff" strokeWidth={1.3} />
            </WindowButton>
            <WindowButton $ml={18} />
          </TitleRight>
        </TitleBar>

        <Ribbon>
          <TabRow>
            <RibbonTab>File</RibbonTab>
            <RibbonTab $active $ml={8}>
              Home
            </RibbonTab>
            <RibbonTab>Insert</RibbonTab>
            <RibbonTab>Modeling</RibbonTab>
            <RibbonTab $ml={2}>View</RibbonTab>
            <RibbonTab>Optimize</RibbonTab>
            <RibbonTab $ml={1}>Help</RibbonTab>
            <ShareButton>
              <ShareIcon />
              Share
              <ChevronDown size={16} strokeWidth={1.6} />
            </ShareButton>
          </TabRow>
          <GroupRow>
            <Group $w={200} $pl={15}>
              <GroupItems>
                <RibbonButton $w={40} $disabled>
                  <IconBox>
                    <PasteIcon />
                  </IconBox>
                  Paste
                </RibbonButton>
                <ClipboardSide>
                  <ClipRow>
                    <CutIcon />
                    Cut
                  </ClipRow>
                  <ClipRow>
                    <CopyIcon />
                    Copy
                  </ClipRow>
                  <ClipRow>
                    <BrushIcon />
                    Format painter
                  </ClipRow>
                </ClipboardSide>
              </GroupItems>
              <GroupLabel $ml={15}>Clipboard</GroupLabel>
            </Group>
            <Group $w={459} $pl={5}>
              <GroupItems>
                <RibbonButton $w={60}>
                  <IconBox>
                    <GetDataIcon />
                  </IconBox>
                  Get
                  <Caretted>data</Caretted>
                </RibbonButton>
                <RibbonButton $w={62}>
                  <IconBox>
                    <ExcelIcon />
                  </IconBox>
                  Excel
                  <span>workbook</span>
                </RibbonButton>
                <RibbonButton $w={88}>
                  <IconBox>
                    <OneLakeIcon />
                  </IconBox>
                  OneLake
                  <Caretted>data hub</Caretted>
                </RibbonButton>
                <RibbonButton $w={40}>
                  <IconBox>
                    <SqlIcon />
                  </IconBox>
                  SQL
                  <span>Server</span>
                </RibbonButton>
                <RibbonButton $w={60}>
                  <IconBox>
                    <EnterDataIcon />
                  </IconBox>
                  Enter
                  <span>data</span>
                </RibbonButton>
                <RibbonButton $w={60}>
                  <IconBox>
                    <DataverseIcon />
                  </IconBox>
                  Dataverse
                </RibbonButton>
                <RibbonButton $w={76}>
                  <IconBox>
                    <RecentIcon />
                  </IconBox>
                  Recent
                  <Caretted>sources</Caretted>
                </RibbonButton>
              </GroupItems>
              <GroupLabel $ml={5}>Data</GroupLabel>
            </Group>
            <Group $w={146} $pl={6}>
              <GroupItems>
                <RibbonButton $w={80}>
                  <IconBox>
                    <TransformIcon />
                  </IconBox>
                  Transform
                  <Caretted>data</Caretted>
                </RibbonButton>
                <RibbonButton $w={46}>
                  <IconBox>
                    <RefreshIcon />
                  </IconBox>
                  Refresh
                </RibbonButton>
              </GroupItems>
              <GroupLabel $ml={6}>Queries</GroupLabel>
            </Group>
            <Group $w={183} $pl={10}>
              <GroupItems>
                <RibbonButton $w={50}>
                  <IconBox>
                    <NewVisualIcon />
                  </IconBox>
                  New
                  <span>visual</span>
                </RibbonButton>
                <RibbonButton $w={50}>
                  <IconBox>
                    <TextBoxIcon />
                  </IconBox>
                  Text
                  <span>box</span>
                </RibbonButton>
                <RibbonButton $w={60}>
                  <IconBox>
                    <MoreVisualsIcon />
                  </IconBox>
                  More
                  <Caretted>visuals</Caretted>
                </RibbonButton>
              </GroupItems>
              <GroupLabel $ml={10}>Insert</GroupLabel>
            </Group>
            <Group $w={143} $pl={12}>
              <GroupItems>
                <RibbonButton $w={58}>
                  <IconBox>
                    <NewMeasureIcon />
                  </IconBox>
                  New
                  <span>measure</span>
                </RibbonButton>
                <RibbonButton $w={64}>
                  <IconBox>
                    <QuickMeasureIcon />
                  </IconBox>
                  Quick
                  <span>measure</span>
                </RibbonButton>
              </GroupItems>
              <GroupLabel $ml={12}>Calculations</GroupLabel>
            </Group>
            <Group $w={91}>
              <GroupItems>
                <RibbonButton $w={90} $disabled>
                  <IconBox>
                    <SensitivityIcon />
                  </IconBox>
                  Sensitivity
                  <SensitivityChevron size={11} strokeWidth={1.6} />
                </RibbonButton>
              </GroupItems>
              <GroupLabel>Sensitivity</GroupLabel>
            </Group>
            <Group $w={76}>
              <GroupItems>
                <RibbonButton $w={75}>
                  <IconBox>
                    <PublishIcon />
                  </IconBox>
                  Publish
                </RibbonButton>
              </GroupItems>
              <GroupLabel>Share</GroupLabel>
            </Group>
            <Group $w={71}>
              <GroupItems>
                <RibbonButton $w={70}>
                  <IconBox>
                    <CopilotRibbonIcon />
                  </IconBox>
                  Copilot
                </RibbonButton>
              </GroupItems>
              <GroupLabel>Copilot</GroupLabel>
            </Group>
          </GroupRow>
          <CollapseButton>
            <ChevronUp size={16} strokeWidth={2.6} color="#323130" />
          </CollapseButton>
        </Ribbon>

        <Main>
          <Rail>
            <RailItem $active>
              <ReportIcon />
            </RailItem>
            <RailItem>
              <TableIcon />
            </RailItem>
            <RailItem>
              <ModelIcon />
            </RailItem>
            <RailItem>
              <DaxIcon />
            </RailItem>
          </Rail>

          <Center>
            <CanvasArea>
              <Canvas>
                <Page>
                  <VisualRow>
                    <Card $w={163} $h={204} $pt={65}>
                      <CardValue>-13K</CardValue>
                      <CardLabel>
                        Total Profit per
                        <br />
                        Department
                      </CardLabel>
                    </Card>
                    <Card $w={222} $h={204} $pt={65} $ml={58}>
                      <CardValue>3.13</CardValue>
                      <CardLabel>Avg Expense Variance (%)</CardLabel>
                    </Card>
                    <Card $w={213} $h={204} $pt={65} $ml={56}>
                      <CardValue>-0.14</CardValue>
                      <CardLabel>Avg Revenue Variance %</CardLabel>
                    </Card>
                    <ChartBlock>
                      <ChartTitle>Expense Amount by Type</ChartTitle>
                      <ExpenseChart />
                    </ChartBlock>
                  </VisualRow>
                  <VisualRow $mt={30}>
                    <Card $w={163} $h={205} $pt={65}>
                      <CardValue>97K</CardValue>
                      <CardLabel>
                        Highest Profit
                        <br />
                        Value
                      </CardLabel>
                    </Card>
                    <Card $w={319} $h={205} $pt={38} $ml={58}>
                      <CardValue>
                        Marketing,&nbsp;
                        <br />
                        Sales
                      </CardValue>
                      <CardLabel $mt={-2}>Top Department by Profit</CardLabel>
                    </Card>
                    <Card $w={163} $h={205} $pt={65} $ml={55}>
                      <CardValue>395K</CardValue>
                      <CardLabel>
                        Total Budgeted
                        <br />
                        Revenue
                      </CardLabel>
                    </Card>
                    <Card $w={162} $h={205} $pt={65} $ml={53}>
                      <CardValue>395K</CardValue>
                      <CardLabel>
                        Total Actual
                        <br />
                        Revenue
                      </CardLabel>
                    </Card>
                  </VisualRow>
                  <VisualRow $mt={41}>
                    <Card $w={317} $h={154} $pt={39} $mt={8}>
                      <CardValue>-3.29</CardValue>
                      <CardLabel $mt={4}>Profit Margin %</CardLabel>
                    </Card>
                    <DeptTable>
                      <thead>
                        <tr>
                          <DeptHead>
                            department
                            <SortArrow />
                          </DeptHead>
                        </tr>
                      </thead>
                      <tbody>
                        <tr>
                          <DeptCell $band>HR</DeptCell>
                        </tr>
                        <tr>
                          <DeptCell>Marketing</DeptCell>
                        </tr>
                        <tr>
                          <DeptCell $band>R&amp;D</DeptCell>
                        </tr>
                        <tr>
                          <PlainCell>Sales</PlainCell>
                        </tr>
                      </tbody>
                    </DeptTable>
                  </VisualRow>
                </Page>
              </Canvas>
              <FiltersPane>
                <ChevronsLeft size={24} strokeWidth={1.4} />
                <FunnelSlot>
                  <FunnelIcon />
                </FunnelSlot>
                <VerticalLabel $mt={8}>Filters</VerticalLabel>
              </FiltersPane>
            </CanvasArea>
            <PageTabs>
              <ViewToggles>
                <ViewButton $w={54} $active>
                  <MonitorIcon />
                </ViewButton>
                <ViewButton $w={56}>
                  <PhoneIcon />
                </ViewButton>
                <PagerArrow />
                <PagerArrow $right />
              </ViewToggles>
              <PageTab $w={122}>Dashboard</PageTab>
              <PageTab $w={84} $active>
                KPI's
                <TabClose>x</TabClose>
              </PageTab>
              <AddPage>
                <Plus size={20} color="#fff" strokeWidth={3} />
              </AddPage>
            </PageTabs>
          </Center>

          <VizPane>
            <ChevronsLeft size={24} strokeWidth={1.4} />
            <VerticalLabel $mt={14}>Visualizations</VerticalLabel>
          </VizPane>

          <DataPane>
            <DataHeader>
              Data
              <ChevronsRight size={24} strokeWidth={1.4} />
            </DataHeader>
            <DataSearch>
              <Search size={18} strokeWidth={1.3} />
              Search
            </DataSearch>
            <TreeList>
              <TreeRow>
                <ChevronRight size={16} strokeWidth={1.2} />
                <FieldCalcIcon />
                Expense Type
              </TreeRow>
              <TreeRow>
                <ChevronRight size={16} strokeWidth={1.2} />
                <FieldTableIcon />
                Finance_data
              </TreeRow>
            </TreeList>
          </DataPane>
        </Main>

        <StatusBar>
          Page 2 of 2
          <ZoomControls>
            <Minus size={10} strokeWidth={2.5} />
            <ZoomTrack>
              <ZoomThumb />
              <ZoomTick />
            </ZoomTrack>
            <Plus size={14} strokeWidth={2.4} />
            <ZoomPct>83%</ZoomPct>
            <FitIcon />
            <UpdateText>Update available (click to download)</UpdateText>
          </ZoomControls>
        </StatusBar>

        <Taskbar>
          <StartButton>
            <WindowsIcon />
          </StartButton>
          <TaskIcon>
            <CopilotIcon id="cp" />
          </TaskIcon>
          <TaskIcon>
            <EdgeIcon />
          </TaskIcon>
          <TaskIcon $open>
            <ExplorerIcon />
          </TaskIcon>
          <TaskIcon>
            <SkypeIcon />
          </TaskIcon>
          <TaskIcon>
            <KrakenIcon />
          </TaskIcon>
          <TaskIcon>
            <VsIcon />
          </TaskIcon>
          <TaskIcon>
            <NodeIcon />
          </TaskIcon>
          <TaskIcon>
            <PostmanIcon />
          </TaskIcon>
          <TaskIcon>
            <DevicesIcon />
            <Badge>99+</Badge>
          </TaskIcon>
          <TaskIcon>
            <NotepadIcon />
          </TaskIcon>
          <TaskIcon>
            <BraveIcon />
          </TaskIcon>
          <TaskIcon>
            <MongoIcon />
          </TaskIcon>
          <TaskIcon>
            <WhatsappIcon />
          </TaskIcon>
          <TaskIcon>
            <MysqlIcon />
          </TaskIcon>
          <TaskIcon>
            <EclipseIcon />
          </TaskIcon>
          <TaskIcon>
            <CopilotIcon id="m3" />
            <M365Tag>M365</M365Tag>
          </TaskIcon>
          <TaskIcon>
            <VscodeIcon />
          </TaskIcon>
          <TaskIcon>
            <ChromeIcon />
          </TaskIcon>
          <TaskIcon $active $open>
            <PowerBiIcon />
          </TaskIcon>
          <TaskIcon $open>
            <ChromeIcon />
            <ProfileDot />
          </TaskIcon>
          <Tray>
            <WeatherBox>
              <WeatherIcon />
              <AlertDot>1</AlertDot>
              29°C
            </WeatherBox>
            <TrayIcons>
              <ChevronUp size={22} strokeWidth={1.2} />
              <CloudSyncIcon />
              <BatteryIcon />
              <SignalIcon />
              <VolumeIcon />
            </TrayIcons>
            <TwoLine $w={40} $ml={3}>
              ENG
              <br />
              IN
            </TwoLine>
            <TwoLine $w={90} $ml={15}>
              12:45
              <br />
              22-05-2025
            </TwoLine>
            <NotifyIcon>
              <NotifyGlyph />
            </NotifyIcon>
          </Tray>
        </Taskbar>
      </Shell>
    </>
  );
}
